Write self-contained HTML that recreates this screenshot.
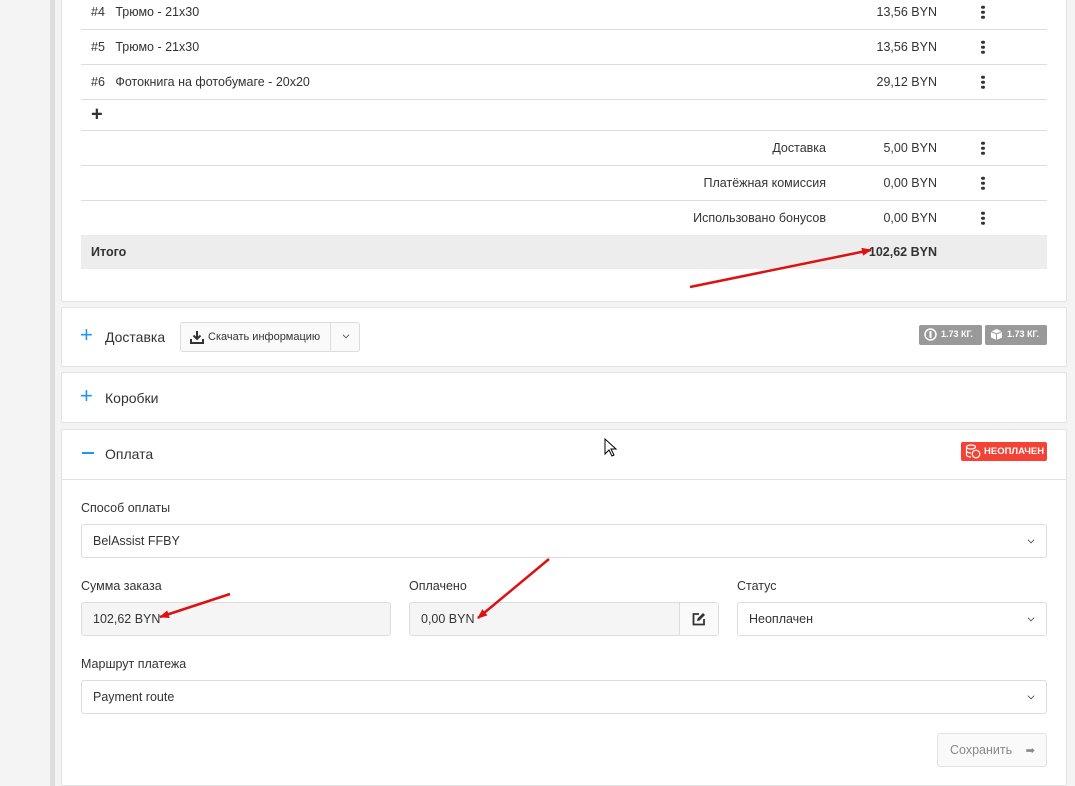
<!DOCTYPE html>
<html><head><meta charset="utf-8"><style>
*{box-sizing:border-box;margin:0;padding:0}
body{width:1075px;height:786px;overflow:hidden;background:#f4f4f4;font-family:"Liberation Sans",sans-serif;color:#333;font-size:12.5px;position:relative}
.bar{position:absolute;left:50px;top:0;width:5px;height:786px;background:#ddd}
.card{position:absolute;left:61px;width:1006px;background:#fff;border:1px solid #e2e2e2;border-radius:2px}
.row{position:absolute;left:19px;width:966px;border-bottom:1px solid #ddd;height:35px}
.t{position:absolute;top:50%;transform:translateY(-50%);white-space:nowrap}
.dots{position:absolute;left:900px;top:50%;transform:translateY(-50%);width:4px}
.dots i{display:block;width:3.5px;height:3.5px;border-radius:50%;background:#333;margin:1.5px 0}
.plus{position:absolute;color:#2196f3;font-size:22px;font-weight:normal}
.h{position:absolute;font-size:14px;color:#333}
.lbl{position:absolute;font-size:12.5px;color:#333}
.inp{position:absolute;height:34px;border:1px solid #ddd;border-radius:3px;background:#fff}
.inp span{position:absolute;left:11px;top:9px;font-size:12.5px}
.chev{position:absolute;right:12px;top:12px;width:6px;height:6px;border-right:1.3px solid #444;border-bottom:1.3px solid #444;transform:rotate(45deg) scale(.8)}
.badge{position:absolute;background:#999;color:#fff;font-size:9px;font-weight:bold;height:20px;border-radius:2px;padding:4px 5px 0 22px}
</style></head><body>
<div class="bar"></div>
<div class="card" style="top:-6px;height:308px">
 <div class="row" style="top:0"><span class="t" style="left:10px">#4&nbsp;&nbsp;&nbsp;Трюмо - 21x30</span><span class="t" style="right:110px">13,56 BYN</span><div class="dots"><i></i><i></i><i></i></div></div>
 <div class="row" style="top:35px"><span class="t" style="left:10px">#5&nbsp;&nbsp;&nbsp;Трюмо - 21x30</span><span class="t" style="right:110px">13,56 BYN</span><div class="dots"><i></i><i></i><i></i></div></div>
 <div class="row" style="top:70px"><span class="t" style="left:10px">#6&nbsp;&nbsp;&nbsp;Фотокнига на фотобумаге - 20x20</span><span class="t" style="right:110px">29,12 BYN</span><div class="dots"><i></i><i></i><i></i></div></div>
 <div class="row" style="top:105px;height:31px"><span class="t" style="left:10px;font-size:20px;font-weight:bold">+</span></div>
 <div class="row" style="top:136px"><span class="t" style="right:221px">Доставка</span><span class="t" style="right:110px">5,00 BYN</span><div class="dots"><i></i><i></i><i></i></div></div>
 <div class="row" style="top:171px"><span class="t" style="right:221px">Платёжная комиссия</span><span class="t" style="right:110px">0,00 BYN</span><div class="dots"><i></i><i></i><i></i></div></div>
 <div class="row" style="top:206px"><span class="t" style="right:221px">Использовано бонусов</span><span class="t" style="right:110px">0,00 BYN</span><div class="dots"><i></i><i></i><i></i></div></div>
 <div class="row" style="top:240px;height:34px;background:#ededed;border:none"><span class="t" style="left:10px;font-weight:bold">Итого</span><span class="t" style="right:110px;font-weight:bold">102,62 BYN</span></div>
</div>
<div class="card" style="top:307px;height:60px">
 <span class="plus" style="left:18px;top:14px">+</span><span class="h" style="left:43px;top:21px">Доставка</span>
 <div style="position:absolute;left:118px;top:14px;width:180px;height:30px;border:1px solid #ddd;border-radius:3px;background:#fafafa">
  <svg style="position:absolute;left:9px;top:7px" width="14" height="14" viewBox="0 0 14 14"><path d="M7 1v8M3.5 5.5L7 9l3.5-3.5" stroke="#333" stroke-width="2" fill="none"/><path d="M1 9v4h12V9" stroke="#333" stroke-width="2" fill="none"/></svg>
  <span style="position:absolute;left:27px;top:8px;font-size:11px">Скачать информацию</span>
  <div style="position:absolute;left:149px;top:0;width:1px;height:28px;background:#ddd"></div>
  <div class="chev" style="right:10px;top:9px"></div>
 </div>
 <div class="badge" style="left:857px;top:17px;width:63px">1.73 КГ.<svg style="position:absolute;left:5px;top:3px" width="13" height="13" viewBox="0 0 13 13"><circle cx="6.5" cy="6.5" r="5.5" fill="none" stroke="#fff" stroke-width="1.5"/><path d="M6.5 3v7" stroke="#fff" stroke-width="2"/></svg></div>
 <div class="badge" style="left:923px;top:17px;width:62px">1.73 КГ.<svg style="position:absolute;left:5px;top:3px" width="13" height="13" viewBox="0 0 13 13"><path d="M6.5 1L12 3.5v6L6.5 12 1 9.5v-6z" fill="#fff"/><path d="M1 3.5l5.5 2.5L12 3.5M6.5 6v6" stroke="#999" stroke-width="1" fill="none"/></svg></div>
</div>
<div class="card" style="top:372px;height:51px">
 <span class="plus" style="left:18px;top:10px">+</span><span class="h" style="left:43px;top:17px">Коробки</span>
</div>
<div class="card" style="top:429px;height:357px">
 <div style="position:absolute;left:20px;top:22px;width:12px;height:2px;background:#2196f3"></div>
 <span class="h" style="left:43px;top:16px">Оплата</span>
 <div style="position:absolute;left:899px;top:12px;width:86px;height:19px;background:#f44336;border-radius:2px;color:#fff;font-size:9.5px;font-weight:bold;padding:4px 0 0 23px">НЕОПЛАЧЕН<svg style="position:absolute;left:4px;top:2px" width="16" height="15" viewBox="0 0 16 15"><g fill="none" stroke="#fff" stroke-width="1.2"><ellipse cx="6" cy="3" rx="4.5" ry="2"/><path d="M1.5 3v8c0 1 2 2 4.5 2M1.5 7c0 1 2 2 4.5 2"/><circle cx="11" cy="10" r="3.8"/></g></svg></div>
 <div style="position:absolute;left:0;top:49px;width:1004px;height:1px;background:#e2e2e2"></div>
 <span class="lbl" style="left:19px;top:71px">Способ оплаты</span>
 <div class="inp" style="left:19px;top:94px;width:966px"><span>BelAssist FFBY</span><div class="chev"></div></div>
 <span class="lbl" style="left:19px;top:149px">Сумма заказа</span>
 <div class="inp" style="left:19px;top:172px;width:310px;background:#f5f5f5"><span>102,62 BYN</span></div>
 <span class="lbl" style="left:347px;top:149px">Оплачено</span>
 <div class="inp" style="left:347px;top:172px;width:310px;background:#f5f5f5"><span>0,00 BYN</span>
  <div style="position:absolute;left:269px;top:0;width:39px;height:32px;border-left:1px solid #ddd;background:#fafafa"><svg style="position:absolute;left:12px;top:9px" width="14" height="14" viewBox="0 0 14 14"><path d="M7 2H1.5v10.5H12V7" fill="none" stroke="#333" stroke-width="1.8"/><path d="M5 9l.5-2.5L11 1l2 2-5.5 5.5z" fill="#333"/></svg></div></div>
 <span class="lbl" style="left:675px;top:149px">Статус</span>
 <div class="inp" style="left:675px;top:172px;width:310px"><span>Неоплачен</span><div class="chev"></div></div>
 <span class="lbl" style="left:19px;top:227px">Маршрут платежа</span>
 <div class="inp" style="left:19px;top:250px;width:966px"><span>Payment route</span><div class="chev"></div></div>
 <div style="position:absolute;left:875px;top:303px;width:110px;height:34px;border:1px solid #e2e2e2;border-radius:3px;background:#fafafa;color:#888;font-size:12.5px;padding:9px 0 0 12px">Сохранить <span style="margin-left:10px;font-size:11px">➡</span></div>
</div>
<svg style="position:absolute;left:603px;top:438px" width="20" height="22" viewBox="0 0 20 22"><path d="M2 1v15l4-4 3 6 2-1-3-6h5z" fill="#fff" stroke="#000" stroke-width="1"/></svg>
<svg style="position:absolute;left:0;top:0" width="1075" height="786">
 <defs><marker id="a" markerWidth="10" markerHeight="8" refX="9" refY="4" orient="auto" markerUnits="userSpaceOnUse"><path d="M0 0L10 4L0 8z" fill="#d11"/></marker></defs>
 <g stroke="#d11" stroke-width="2.5" fill="none" marker-end="url(#a)">
  <line x1="690" y1="287" x2="871" y2="250"/>
  <line x1="230" y1="594" x2="160" y2="617"/>
  <line x1="549" y1="559" x2="478" y2="618"/>
 </g>
</svg>
</body></html>
